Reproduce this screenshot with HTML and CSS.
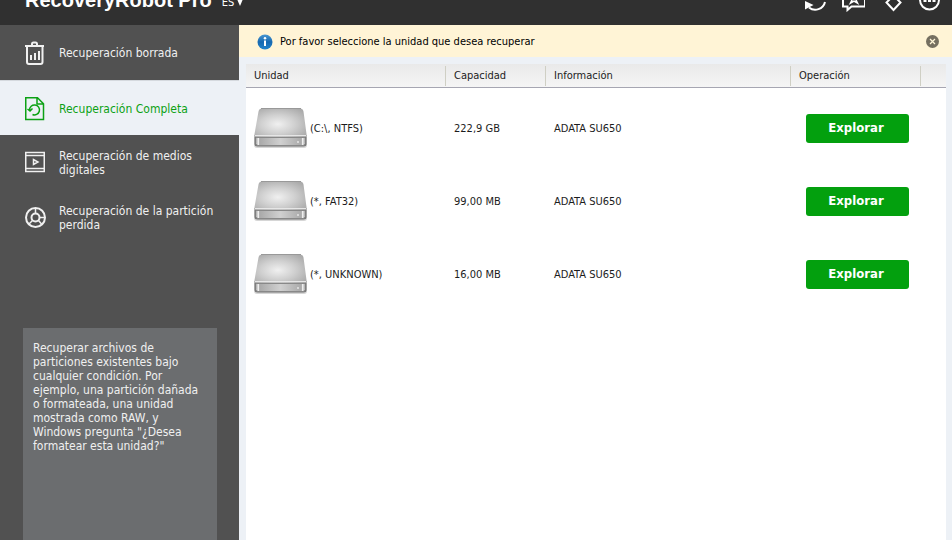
FILE: index.html
```html
<!DOCTYPE html>
<html lang="es">
<head>
<meta charset="utf-8">
<title>RecoveryRobot Pro</title>
<link rel="stylesheet" href="styles.css">
</head>
<body>
<svg class="defs" aria-hidden="true">
  <defs>
    <radialGradient id="lid" cx="0.45" cy="0.55" r="0.65">
      <stop offset="0" stop-color="#f0f0f0"/>
      <stop offset="0.5" stop-color="#d0d0d0"/>
      <stop offset="1" stop-color="#ababab"/>
    </radialGradient>
    <linearGradient id="front" x1="0" x2="1" y1="0" y2="0">
      <stop offset="0" stop-color="#ececec"/>
      <stop offset="0.08" stop-color="#aaaaaa"/>
      <stop offset="0.5" stop-color="#d0d0d0"/>
      <stop offset="0.92" stop-color="#aaaaaa"/>
      <stop offset="1" stop-color="#ececec"/>
    </linearGradient>
    <linearGradient id="ball" x1="0" x2="0" y1="0" y2="1">
      <stop offset="0" stop-color="#4a97d2"/>
      <stop offset="0.5" stop-color="#1668b0"/>
      <stop offset="1" stop-color="#2485cb"/>
    </linearGradient>
    <symbol id="drive" viewBox="0 0 54 44">
      <path d="M0 30h53v8q0 3-3 3H3q-3 0-3-3z" fill="#000" opacity=".16"/>
      <path d="M.5 28h52v9q0 2.500-3 2.500h-46q-3 0-3-2.500z" fill="#777"/>
      <path d="M8 1.500h38q3 0 3.500 3L52.500 27q.5 3-1 3H1.500q-1.500 0-1-3L4.500 4.500q.5-3 3.500-3z" fill="url(#lid)"/>
      <path d="M7 1.500h40" stroke="#999"/>
      <path d="M1 28.500h51" stroke="#e6e6e6"/>
      <path d="M2 30.500h49v6q0 2-2 2H4q-2 0-2-2z" fill="url(#front)" stroke="#888"/>
      <path d="M4.500 31v7M48.500 31v7" stroke="#eee"/>
      <path d="M44 34v2" stroke="#fff"/>
    </symbol>
  </defs>
</svg>
<header class="topbar">
  <div class="topbar-inner">
    <h1 class="brand">RecoveryRobot Pro</h1>
    <button class="lang" type="button">ES<span class="caret"></span></button>
    <nav class="tools">
      <button type="button" aria-label="Actualizar"><svg viewBox="0 0 24 24"><path d="M22 14A10 10 0 0 1 6 19.500M2.500 9A10 10 0 0 1 19 5"/><path class="solid" d="M2 13v8.500L10.500 17z"/></svg></button>
      <button type="button" aria-label="Comentarios"><svg viewBox="0 0 24 24"><path d="M2 3h22v15.500H10.500L6.500 22v-3.500H2z"/><path d="M13 6l1.500 4h3l-2.500 2 1.500 3-3.500-2-3.500 2 1.500-3-2.500-2h3z" stroke-width="1.500"/></svg></button>
      <button type="button" aria-label="Licencia"><svg viewBox="0 0 24 24"><path d="M16 9l5.500 5.500-7 7.500-7-7.500L13 9"/><path d="M13 9V2"/></svg></button>
      <button type="button" aria-label="Más"><svg viewBox="0 0 24 24"><circle cx="12.500" cy="12" r="9.500"/><path d="M6.500 12.500h3M11 12.500h3M15.500 12.500h3" stroke-width="3"/></svg></button>
    </nav>
  </div>
</header>
<div class="body">
  <aside class="sidebar">
    <nav>
      <a class="item" href="#borrada"><svg viewBox="0 0 22 24"><path d="M0 5h19M7 5V3q0-1.500 1.500-1.500h2q1.500 0 1.500 1.500v2M2 6v15q0 2 2 2h11.500q2 0 2-2V6" stroke-width="2"/><path d="M6 19v-5M10 19v-7M14 19v-9" stroke-width="2"/></svg><span>Recuperación borrada</span></a>
      <a class="item active" href="#completa"><svg viewBox="0 0 22 24"><path d="M.750.750H12.500l6 6V22.500H.750zM12 1v6h6.500" stroke-width="1.500"/><path d="M4.500 13a5 5 0 1 1 3 4.500M2.500 12l2.500 2 2.500-2.500" stroke-width="1.500"/></svg><span>Recuperación Completa</span></a>
      <a class="item" href="#medios"><svg viewBox="0 0 22 24"><path d="M.750 1.500h18.500v19H.750z" stroke-width="1.500"/><path d="M1 4.500h18M1 17.500h18" stroke-width="1.500"/><path d="M8.500 8.500v5l4.500-2.500z" stroke-width="1.500"/></svg><span>Recuperación de medios digitales</span></a>
      <a class="item" href="#particion"><svg viewBox="0 0 22 24"><circle cx="10.500" cy="11.500" r="9.500" stroke-width="2"/><circle cx="10.500" cy="11.500" r="4" stroke-width="2"/><path d="M10.500 2v5.500M14.500 11.500H20M7.500 14.500l-4 4M13.500 14.500l3.500 4" stroke-width="1.500"/></svg><span>Recuperación de la partición perdida</span></a>
    </nav>
    <p class="hint">Recuperar archivos de particiones existentes bajo cualquier condición. Por ejemplo, una partición dañada o formateada, una unidad mostrada como RAW, y Windows pregunta "¿Desea formatear esta unidad?"</p>
  </aside>
  <main class="main">
    <div class="notice">
      <svg class="info" viewBox="0 0 16 16"><circle cx="8" cy="8" r="7.500" fill="url(#ball)"/><circle cx="8" cy="4.250" r="1.250" fill="#fff"/><path d="M7 6.500h2V12H7z" fill="#fff"/></svg>
      <span>Por favor seleccione la unidad que desea recuperar</span>
      <button class="close" type="button" aria-label="Cerrar"><svg viewBox="0 0 13 13"><circle cx="6.500" cy="6.500" r="6.500" fill="#756f60"/><path d="M4 4l5 5M9 4l-5 5" stroke="#fff5d8" stroke-width="1.250"/></svg></button>
    </div>
    <div class="panel">
      <table>
        <colgroup><col class="c-unit"><col class="c-cap"><col><col class="c-op"><col class="c-end"></colgroup>
        <thead><tr><th>Unidad</th><th>Capacidad</th><th>Información</th><th>Operación</th><th></th></tr></thead>
        <tbody>
          <tr><td><div class="unit"><svg><use href="#drive"/></svg>(C:\, NTFS)</div></td><td>222,9 GB</td><td>ADATA SU650</td><td colspan="2"><button class="explore" type="button">Explorar</button></td></tr>
          <tr><td><div class="unit"><svg><use href="#drive"/></svg>(*, FAT32)</div></td><td>99,00 MB</td><td>ADATA SU650</td><td colspan="2"><button class="explore" type="button">Explorar</button></td></tr>
          <tr><td><div class="unit"><svg><use href="#drive"/></svg>(*, UNKNOWN)</div></td><td>16,00 MB</td><td>ADATA SU650</td><td colspan="2"><button class="explore" type="button">Explorar</button></td></tr>
        </tbody>
      </table>
    </div>
  </main>
</div>
</body>
</html>
```

FILE: styles.css
```css
* { box-sizing: border-box; }
body {
  margin: 0;
  height: 100vh;
  display: flex;
  flex-direction: column;
  overflow: hidden;
  background: #edf1f6;
  color: #1c1c1c;
  font: 11px/14px "DejaVu Sans Condensed", "Noto Sans", sans-serif;
}
button { border: 0; padding: 0; background: none; font: inherit; color: inherit; cursor: pointer; }
svg { display: block; flex: none; }
.defs { position: absolute; width: 0; height: 0; }

.topbar { flex: none; height: 25px; overflow: hidden; background: #303030; color: #fff; }
.topbar-inner { display: flex; align-items: center; height: 50px; margin-top: -25px; padding: 0 11px 0 25px; }
.brand { margin: 0; font: bold 20px/24px "Liberation Sans", sans-serif; }
.lang { display: flex; align-items: center; gap: 3px; margin: 5px 0 0 10px; }
.caret { border: 3px solid transparent; border-top: 7px solid #fff; border-bottom: 0; }
.tools { display: flex; gap: 14px; margin-left: auto; }
.tools svg { width: 24px; height: 24px; fill: none; stroke: #fff; stroke-width: 2; }
.tools .solid { fill: #fff; stroke: none; }

.body { flex: 1; display: flex; min-height: 0; }
.sidebar { flex: none; width: 239px; display: flex; flex-direction: column; background: #515151; }
.item {
  display: flex;
  align-items: center;
  gap: 12px;
  height: 55px;
  padding: 1px 16px 0 25px;
  color: #f0f0f0;
  font-size: 12px;
  text-decoration: none;
}
.item svg { width: 22px; height: 24px; fill: none; stroke: currentColor; }
.item.active { background: #edf1f6; color: #0ca114; border-top: 1px solid #d5d9de; }
.hint {
  flex: 1;
  margin: 83px 22px 0 23px;
  padding: 13px 16px 0 10px;
  background: #6b6d6f;
  color: #f0f0f0;
  font-size: 12px;
}

.main { flex: 1; display: flex; flex-direction: column; min-width: 0; }
.notice {
  flex: none;
  display: flex;
  align-items: center;
  gap: 7px;
  height: 32px;
  padding: 1px 13px 0 18px;
  background: #fff4d6;
  color: #000;
}
.info { width: 16px; height: 16px; }
.close { margin-left: auto; }
.close svg { width: 13px; height: 13px; }

.panel { flex: 1; margin: 7px 6px 0 7px; background: #fff; }
table { width: 100%; table-layout: fixed; border-collapse: separate; border-spacing: 0; }
.c-unit { width: 200px; }
.c-cap { width: 100px; }
.c-op { width: 130px; }
.c-end { width: 25px; }
th {
  height: 24px;
  padding: 1px 8px 0;
  text-align: left;
  font-weight: normal;
  background: linear-gradient(90deg, #cfcfc4, #cfcfc4) right 2px / 1px 20px no-repeat, linear-gradient(#e9e9e9, #f5f5f5);
  border-bottom: 1px solid #a6a6b2;
}
th:last-child { background: linear-gradient(#e9e9e9, #f5f5f5); }
tbody::before { content: ""; display: block; height: 4px; }
td { height: 73px; padding: 1px 8px 0; vertical-align: middle; }
td:last-child { padding: 0 0 0 15px; }
.unit { display: flex; align-items: center; gap: 2px; }
.unit svg { width: 54px; height: 44px; }
.explore {
  width: 103px;
  height: 29px;
  padding: 0 3px 1px 0;
  border-radius: 3px;
  background: #03a00e;
  color: #fff;
  font-size: 13px;
  font-weight: bold;
}
```
